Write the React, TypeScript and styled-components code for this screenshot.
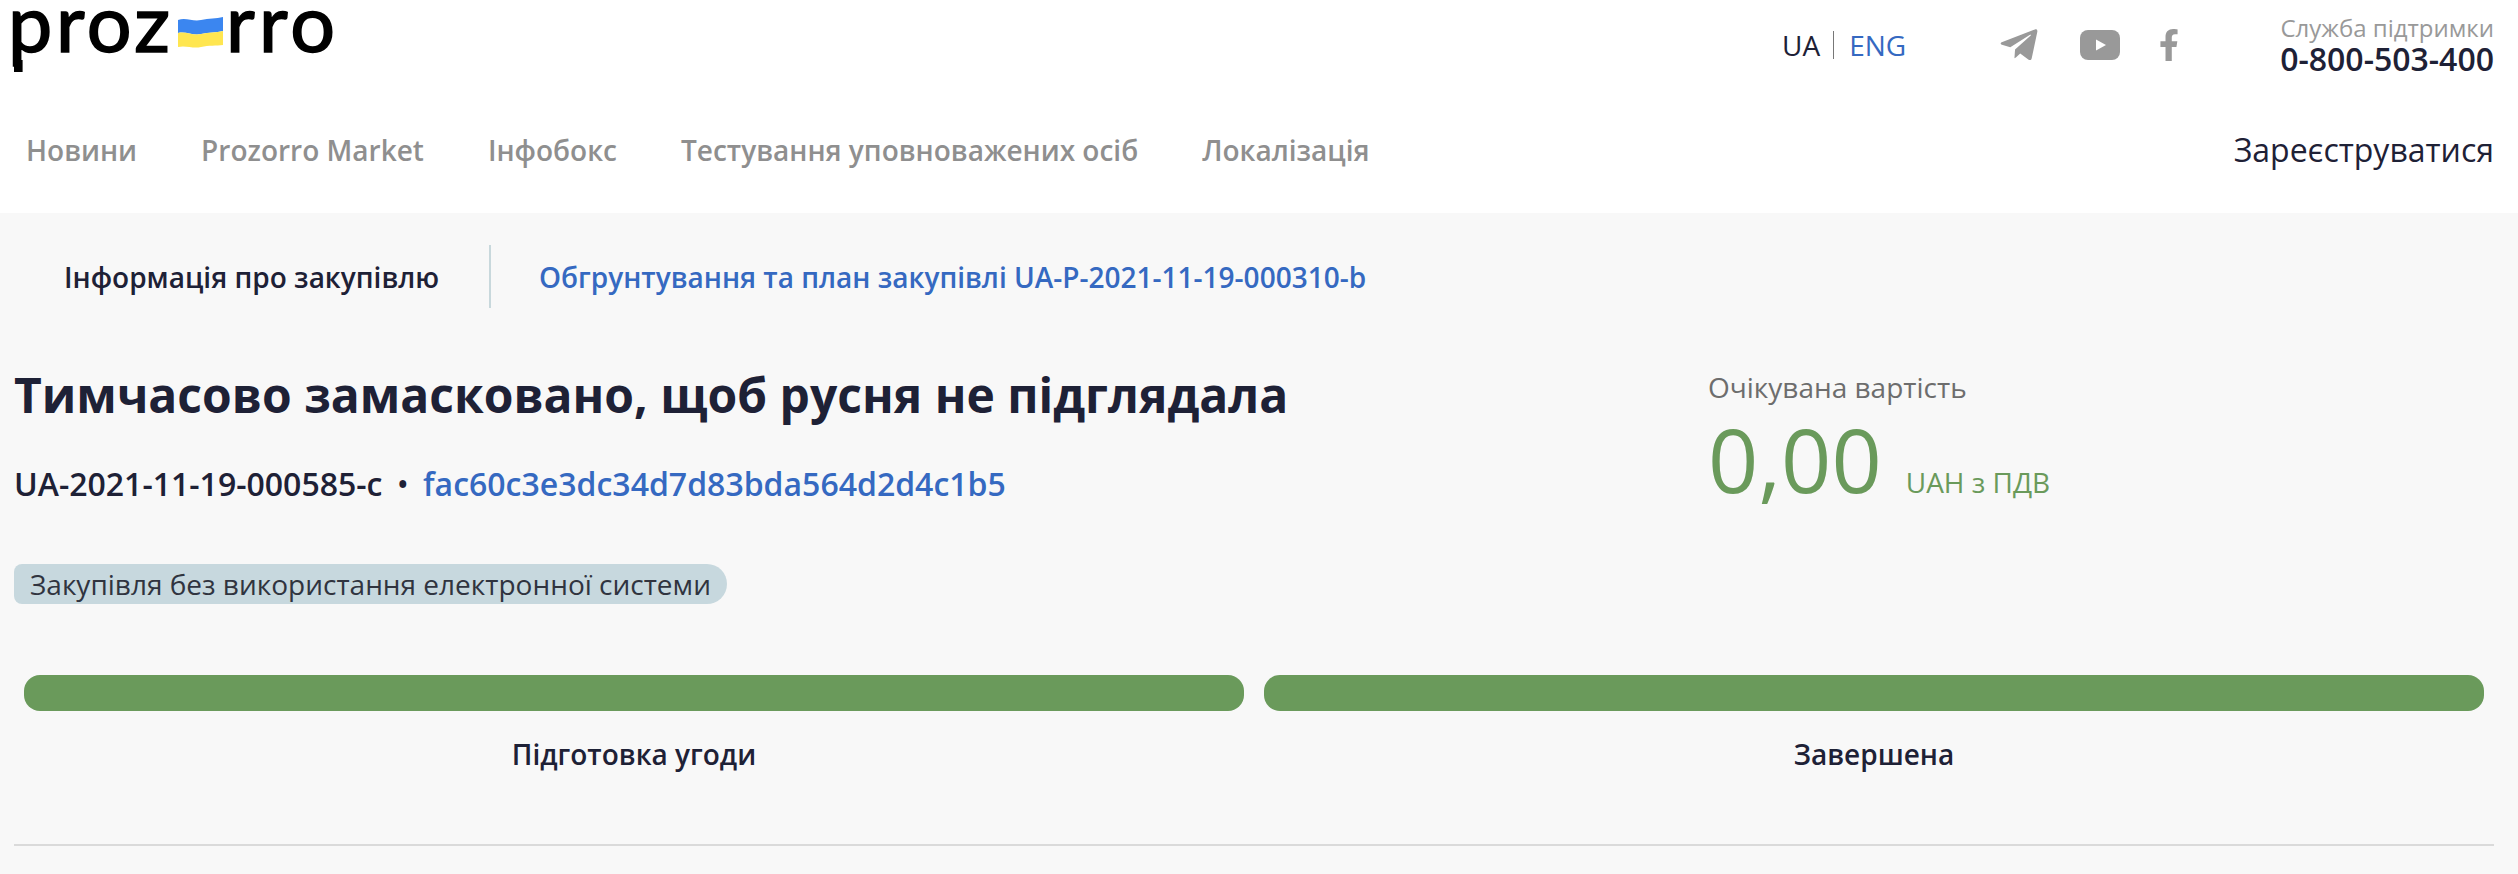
import React from "react";
import styled, { createGlobalStyle } from "styled-components";
import { FaFacebookF, FaTelegramPlane } from "react-icons/fa";

const GlobalStyle = createGlobalStyle`
  html, body {
    margin: 0;
    padding: 0;
    background: #f8f8f8;
    overflow: hidden;
  }

  body {
    font-family: "Open Sans", "Liberation Sans", sans-serif;
    color: #1e2136;
  }
`;

const Header = styled.header`
  height: 213px;
  background: #fff;
  padding: 0 24px 0 14px;
  box-sizing: border-box;
`;

const TopRow = styled.div`
  height: 100px;
  display: flex;
  align-items: flex-start;
`;

const Logo = styled.svg`
  display: block;
  flex: none;
  overflow: visible;
`;

const LogoText = styled.text`
  font-family: "Lato", sans-serif;
  font-size: 79px;
  font-weight: 400;
  fill: #000;
  stroke: #000;
  stroke-width: 1.6px;
`;

const TopRight = styled.div`
  margin-left: auto;
  display: flex;
  align-items: flex-start;
`;

const LangSwitch = styled.div`
  display: flex;
  align-items: center;
  height: 28px;
  margin-top: 31px;
  font-size: 28px;
  line-height: 28px;
`;

const LangLink = styled.span<{ $active?: boolean }>`
  color: ${(p) => (p.$active ? "#1e2136" : "#3569c1")};
`;

const LangDivider = styled.span`
  width: 1px;
  height: 28px;
  margin: 0 15px 0 13px;
  background: #777;
`;

const Socials = styled.div`
  display: flex;
  align-items: center;
  height: 32px;
  margin: 29px 0 0 92px;
  color: #999;
  gap: 33px;
`;

const TelegramIcon = styled(FaTelegramPlane)`
  margin-right: 7px;
`;

const YoutubeIcon = styled.svg`
  width: 40px;
  height: 30px;
  display: block;
`;

const Support = styled.div`
  margin-left: 95px;
  padding-top: 12px;
  text-align: right;
`;

const SupportLabel = styled.div`
  font-size: 24px;
  line-height: 32px;
  color: #999;
`;

const SupportPhone = styled.div`
  font-size: 32px;
  line-height: 30px;
  font-weight: 600;
`;

const NavRow = styled.nav`
  display: flex;
  align-items: center;
  height: 100px;
  padding-left: 12px;
  gap: 64px;
`;

const NavLink = styled.a`
  font-size: 28px;
  line-height: 36px;
  font-weight: 600;
  color: #8f8f8f;
`;

const RegisterLink = styled.a`
  margin-left: auto;
  font-size: 32px;
  line-height: 36px;
  color: #1e2136;
`;

const Main = styled.main`
  padding: 32px 24px 0 14px;
`;

const Tabs = styled.div`
  display: flex;
  align-items: center;
  height: 63px;
  font-size: 28px;
  font-weight: 600;
  line-height: 36px;
`;

const TabCurrent = styled.div`
  width: 477px;
  box-sizing: border-box;
  padding-left: 50px;
  height: 63px;
  display: flex;
  align-items: center;
  border-right: 2px solid #c8d8dc;
`;

const TabLink = styled.a`
  margin-left: 48px;
  color: #3569c1;
`;

const Summary = styled.section`
  display: flex;
  margin-top: 56px;
`;

const SummaryMain = styled.div`
  width: 1694px;
`;

const Title = styled.h1`
  margin: 0;
  font-size: 48px;
  line-height: 62px;
  font-weight: 700;
`;

const IdRow = styled.div`
  display: flex;
  align-items: center;
  margin-top: 36px;
  font-size: 32px;
  line-height: 44px;
  font-weight: 600;
`;

const IdDot = styled.span`
  margin: 0 15px;
  font-size: 28px;
`;

const IdHash = styled.a`
  color: #3569c1;
`;

const Chip = styled.span`
  display: inline-block;
  margin-top: 58px;
  padding: 0 16px;
  height: 40px;
  line-height: 40px;
  font-size: 28px;
  background: #c7d8de;
  border-radius: 8px 20px 20px 8px;
  color: #30343f;
`;

const Price = styled.div`
  padding-top: 5px;
`;

const PriceLabel = styled.div`
  font-size: 28px;
  line-height: 36px;
  color: #6d6d6d;
`;

const PriceRow = styled.div`
  display: flex;
  align-items: baseline;
  color: #6a9a5b;
  margin-top: 4px;
`;

const PriceValue = styled.span`
  font-size: 88px;
  line-height: 100px;
`;

const PriceCurrency = styled.span`
  margin-left: 24px;
  font-size: 28px;
`;

const Status = styled.section`
  display: grid;
  grid-template-columns: 1fr 1fr;
  gap: 20px;
  margin-top: 71px;
  padding: 0 10px;
`;

const StatusStep = styled.div`
  display: flex;
  flex-direction: column;
  align-items: center;
`;

const StatusBar = styled.div`
  width: 100%;
  height: 36px;
  border-radius: 16px;
  background: #6a9a5b;
`;

const StatusLabel = styled.div`
  margin-top: 25px;
  font-size: 28px;
  line-height: 36px;
  font-weight: 600;
`;

const Divider = styled.hr`
  margin: 72px 0 0;
  border: 0;
  height: 2px;
  background: #dadada;
`;

const navItems = [
  "Новини",
  "Prozorro Market",
  "Інфобокс",
  "Тестування уповноважених осіб",
  "Локалізація",
];

const steps = ["Підготовка угоди", "Завершена"];

const App: React.FC = () => {
  return (
    <>
      <GlobalStyle />
      <Header>
        <TopRow>
          <Logo width="320" height="74" viewBox="0 0 320 74">
            <LogoText x="-6" y="52" textLength="162">
              proz
            </LogoText>
            <rect x="0" y="60" width="8.6" height="12" fill="#000" />
            <path
              d="M164 20 C172 17 179 22 187 20 C195 18 202 19 209 17 V31 C202 33 195 32 187 34 C179 36 172 31 164 33 Z"
              fill="#3b86f0"
            />
            <path
              d="M164 33 C172 31 179 36 187 34 C195 32 202 33 209 31 V45 C202 46 195 45 187 47 C179 49 172 45 164 47 Z"
              fill="#ffe650"
            />
            <LogoText x="212" y="52" textLength="109">
              rro
            </LogoText>
          </Logo>
          <TopRight>
            <LangSwitch>
              <LangLink $active>UA</LangLink>
              <LangDivider />
              <LangLink>ENG</LangLink>
            </LangSwitch>
            <Socials>
              <TelegramIcon size={42} />
              <YoutubeIcon viewBox="0 0 40 30">
                <rect width="40" height="30" rx="8" fill="#999" />
                <path d="M16 9.5 L26 15 L16 20.5 Z" fill="#fff" />
              </YoutubeIcon>
              <FaFacebookF size={32} />
            </Socials>
            <Support>
              <SupportLabel>Служба підтримки</SupportLabel>
              <SupportPhone>0-800-503-400</SupportPhone>
            </Support>
          </TopRight>
        </TopRow>
        <NavRow>
          {navItems.map((item) => (
            <NavLink key={item}>{item}</NavLink>
          ))}
          <RegisterLink>Зареєструватися</RegisterLink>
        </NavRow>
      </Header>
      <Main>
        <Tabs>
          <TabCurrent>Інформація про закупівлю</TabCurrent>
          <TabLink>Обгрунтування та план закупівлі UA-P-2021-11-19-000310-b</TabLink>
        </Tabs>
        <Summary>
          <SummaryMain>
            <Title>Тимчасово замасковано, щоб русня не підглядала</Title>
            <IdRow>
              UA-2021-11-19-000585-c
              <IdDot>•</IdDot>
              <IdHash>fac60c3e3dc34d7d83bda564d2d4c1b5</IdHash>
            </IdRow>
            <Chip>Закупівля без використання електронної системи</Chip>
          </SummaryMain>
          <Price>
            <PriceLabel>Очікувана вартість</PriceLabel>
            <PriceRow>
              <PriceValue>0,00</PriceValue>
              <PriceCurrency>UAH з ПДВ</PriceCurrency>
            </PriceRow>
          </Price>
        </Summary>
        <Status>
          {steps.map((step) => (
            <StatusStep key={step}>
              <StatusBar />
              <StatusLabel>{step}</StatusLabel>
            </StatusStep>
          ))}
        </Status>
        <Divider />
      </Main>
    </>
  );
};

export default App;
